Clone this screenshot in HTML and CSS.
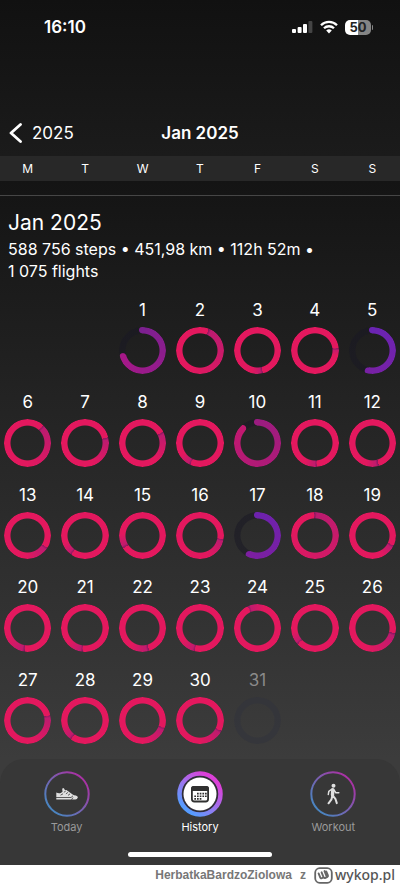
FILE: index.html
```html
<!DOCTYPE html>
<html lang="en">
<head>
<meta charset="utf-8">
<meta name="viewport" content="width=device-width, initial-scale=1">
<title>Jan 2025</title>
<link rel="stylesheet" href="styles.css">
</head>
<body>
<header class="top">
  <div class="status">
    <time class="clock">16:10</time>
    <div class="status-icons">
      <svg width="21" height="14" viewBox="0 0 21 14" aria-hidden="true"><g fill="#fff"><rect x="0" y="9" width="4" height="4" rx="1"/><rect x="5.6" y="7" width="4" height="6" rx="1"/><rect x="11" y="4" width="4" height="9" rx="1"/><rect x="16.4" y="1" width="4" height="12" rx="1" fill="#454545"/></g></svg>
      <svg width="18" height="14" viewBox="0 0 18 14" aria-hidden="true"><g fill="none" stroke="#fff" stroke-width="2.3"><path d="M1 5.2a11.4 11.4 0 0 1 16 0"/><path d="M4 8.3a7.1 7.1 0 0 1 10 0"/></g><path d="M9 13.4 6.2 10.6a4 4 0 0 1 5.6 0z" fill="#fff"/></svg>
      <span class="battery"><span class="battery-level">50</span></span>
    </div>
  </div>
  <nav class="navbar">
    <a class="back" href="#year"><svg width="13" height="20" viewBox="0 0 13 20" aria-hidden="true"><path d="M11.5 1.5 2 10l9.500 8.500" fill="none" stroke="#fff" stroke-width="2.800" stroke-linecap="round" stroke-linejoin="round"/></svg>2025</a>
    <h1 class="title">Jan 2025</h1>
  </nav>
</header>
<div class="weekdays week-grid"><span>M</span><span>T</span><span>W</span><span>T</span><span>F</span><span>S</span><span>S</span></div>
<main class="history">
  <section class="summary">
    <h2>Jan 2025</h2>
    <p>588 756 steps • 451,98 km • 112h 52m •<br>1 075 flights</p>
  </section>
  <section class="days week-grid">
    <button class="day first"><span>1</span><i class="ring partial" style="--head:262deg;--from:#7c2090;--to:#a71888"></i></button>
    <button class="day"><span>2</span><i class="ring" style="--head:22deg;--fade:190deg"></i></button>
    <button class="day"><span>3</span><i class="ring" style="--head:166deg;--fade:30deg"></i></button>
    <button class="day"><span>4</span><i class="ring" style="--head:83deg;--fade:20deg"></i></button>
    <button class="day"><span>5</span><i class="ring partial" style="--head:201deg;--from:#6a24b2;--to:#7821a4"></i></button>
    <button class="day"><span>6</span><i class="ring" style="--head:41deg;--fade:140deg"></i></button>
    <button class="day"><span>7</span><i class="ring" style="--head:76deg;--fade:85deg"></i></button>
    <button class="day"><span>8</span><i class="ring" style="--head:61deg;--fade:80deg"></i></button>
    <button class="day"><span>9</span><i class="ring" style="--head:203deg;--fade:35deg"></i></button>
    <button class="day"><span>10</span><i class="ring partial" style="--head:322deg;--from:#9a1c80;--to:#c21970"></i></button>
    <button class="day"><span>11</span><i class="ring" style="--head:174deg;--fade:35deg"></i></button>
    <button class="day"><span>12</span><i class="ring" style="--head:164deg;--fade:35deg"></i></button>
    <button class="day"><span>13</span><i class="ring" style="--head:121deg;--fade:65deg"></i></button>
    <button class="day"><span>14</span><i class="ring" style="--head:215deg;--fade:35deg"></i></button>
    <button class="day"><span>15</span><i class="ring" style="--head:236deg;--fade:40deg"></i></button>
    <button class="day"><span>16</span><i class="ring" style="--head:98deg;--fade:60deg"></i></button>
    <button class="day"><span>17</span><i class="ring partial" style="--head:213deg;--from:#6d22ae;--to:#7c1fa0"></i></button>
    <button class="day"><span>18</span><i class="ring" style="--head:358deg;--fade:290deg"></i></button>
    <button class="day"><span>19</span><i class="ring" style="--head:115deg;--fade:40deg"></i></button>
    <button class="day"><span>20</span><i class="ring" style="--head:187deg;--fade:60deg"></i></button>
    <button class="day"><span>21</span><i class="ring" style="--head:185deg;--fade:45deg"></i></button>
    <button class="day"><span>22</span><i class="ring" style="--head:163deg;--fade:50deg"></i></button>
    <button class="day"><span>23</span><i class="ring" style="--head:192deg;--fade:40deg"></i></button>
    <button class="day"><span>24</span><i class="ring" style="--head:335deg;--fade:45deg"></i></button>
    <button class="day"><span>25</span><i class="ring" style="--head:226deg;--fade:35deg"></i></button>
    <button class="day"><span>26</span><i class="ring" style="--head:103deg;--fade:90deg"></i></button>
    <button class="day"><span>27</span><i class="ring" style="--head:76deg;--fade:90deg"></i></button>
    <button class="day"><span>28</span><i class="ring" style="--head:216deg;--fade:45deg"></i></button>
    <button class="day"><span>29</span><i class="ring" style="--head:108deg;--fade:70deg"></i></button>
    <button class="day"><span>30</span><i class="ring" style="--head:115deg;--fade:65deg"></i></button>
    <button class="day" disabled><span>31</span><i class="ring empty"></i></button>
  </section>
</main>
<footer class="dock">
  <nav class="tabs">
    <a class="tab" href="#today">
      <svg width="46" height="46" viewBox="0 0 46 46" aria-hidden="true">
        <defs><linearGradient id="thin" x1="0.15" y1="0.85" x2="0.85" y2="0.15"><stop offset="0" stop-color="#4a84c0"/><stop offset=".5" stop-color="#7860b0"/><stop offset="1" stop-color="#a832a4"/></linearGradient></defs>
        <circle cx="23" cy="23" r="21.700" fill="none" stroke="url(#thin)" stroke-width="2"/>
        <path d="M12.300 21.600q2 .9 4.500.4l1.700-1.200-.3-2.800q.7-1.600 1.800-.6l.9 1.600 1.500-.1 6.300 4.500q1.200.9 3.200 1 1.700.4 2 1.800-.6 2.200-2.500 2.200H12.300z" fill="#e0e0e0"/>
        <path d="m19.800 21.400 2-1.500M21.900 22.900l2-1.500M24 24.400l2-1.500M12 26.500h15l2-1.700M27.500 28.800l1.500-2.300M16.500 24.200l2.500-1.400" fill="none" stroke="#383838" stroke-width=".8"/>
      </svg>
      <span>Today</span>
    </a>
    <a class="tab active" href="#history" aria-current="page">
      <svg width="46" height="46" viewBox="0 0 46 46" aria-hidden="true">
        <defs><linearGradient id="bold" x1="0.2" y1="0.9" x2="0.8" y2="0.15"><stop offset="0" stop-color="#559cff"/><stop offset=".45" stop-color="#9878f0"/><stop offset="1" stop-color="#db40d8"/></linearGradient></defs>
        <circle cx="23" cy="23" r="20.500" fill="#302d38" stroke="url(#bold)" stroke-width="4.500"/>
        <circle cx="23" cy="23" r="16.500" fill="#fff"/>
        <rect x="14.900" y="15.900" width="16.200" height="14.600" rx="2.500" fill="#fff" stroke="#303030" stroke-width="1.800"/>
        <path d="M14 20v-2.500q0-2.500 2.500-2.500h13q2.500 0 2.500 2.500V20z" fill="#303030"/>
        <g fill="#303030"><path d="M20 21.800h1.700v1.700H20zM22.700 21.800h1.700v1.700h-1.700zM25.400 21.800h1.700v1.700h-1.700zM28 21.800h1.700v1.700H28zM17.300 24.400H19v1.700h-1.700zM20 24.400h1.700v1.700H20zM22.700 24.400h1.700v1.700h-1.700zM25.400 24.400h1.700v1.700h-1.700zM28 24.400h1.700v1.700H28zM17.300 27H19v1.700h-1.700zM20 27h1.700v1.700H20zM22.700 27h1.700v1.700h-1.700z"/></g>
      </svg>
      <span>History</span>
    </a>
    <a class="tab" href="#workout">
      <svg width="46" height="46" viewBox="0 0 46 46" aria-hidden="true">
        <circle cx="23" cy="23" r="21.700" fill="none" stroke="url(#thin)" stroke-width="2"/>
        <circle cx="23.500" cy="14.700" r="2" fill="#e0e0e0"/>
        <g fill="none" stroke="#e0e0e0" stroke-linecap="round" stroke-linejoin="round"><path d="m22.800 18.800-.3 5.400" stroke-width="3.400"/><path d="m22 18-3.200 2.300-.5 3.200M23.800 18.800l2 2.900 3 .1" stroke-width="1.500"/><path d="m22.300 24.800-.8 3.500-3 4M23 24.800l2.400 3 1.400 4.300" stroke-width="2"/></g>
      </svg>
      <span>Workout</span>
    </a>
  </nav>
  <div class="home-bar"></div>
</footer>
<div class="credit">
  <span class="author">HerbatkaBardzoZiolowa</span><span class="author">z</span>
  <span class="brand"><svg width="19" height="17" viewBox="0 0 19 17" aria-hidden="true"><rect x="1.200" y="1.200" width="16.600" height="14.600" rx="4.500" fill="#fff" stroke="#666" stroke-width="1.800"/><path d="m4.600 6.400 1.700 4.300q.5 1 1.500.5l1.800-.8q.8 1 1.900.4l1.900-.9q.9-.5.5-1.500l-1.700-4M7.600 5.300l2 5.100M10.500 4.100l2.300 5.700" fill="none" stroke="#666" stroke-width="1.900" stroke-linecap="round" stroke-linejoin="round"/></svg>wykop.pl</span>
</div>
</body>
</html>
```
FILE: styles.css
```css
* { box-sizing: border-box; }

body {
  margin: 0;
  min-height: 100vh;
  display: flex;
  flex-direction: column;
  background: #3c3c3c;
  color: #fff;
  font-family: Inter, Roboto, sans-serif;
}

h1, h2, p { margin: 0; font-weight: 400; }
a { color: inherit; text-decoration: none; }

.top {
  background: linear-gradient(#111, #1b1b1b);
  padding: 16px 0 12px;
}

.status {
  display: flex;
  align-items: center;
  justify-content: space-between;
  height: 22px;
  padding: 0 27px 0 44px;
}
.clock { font-size: 17px; font-weight: 600; }
.status-icons { display: flex; align-items: center; gap: 7px; }

.battery { display: flex; align-items: center; gap: 1px; }
.battery::after {
  content: "";
  width: 1px;
  height: 5px;
  border-radius: 0 2px 2px 0;
  background: #858585;
}
.battery-level {
  width: 26px;
  border-radius: 5px;
  background: linear-gradient(90deg, #fff 50%, #858585 50%);
  color: #222;
  font-size: 13px;
  font-weight: 700;
  line-height: 15px;
  text-align: center;
}

.navbar {
  display: grid;
  grid-template-columns: 1fr auto 1fr;
  align-items: center;
  padding: 0 9px;
  margin-top: 84px;
  font-size: 17px;
  line-height: 22px;
}
.back { display: flex; align-items: center; gap: 10px; }
.title { font-size: 17px; font-weight: 600; }

.week-grid {
  display: grid;
  grid-template-columns: repeat(7, 1fr);
  column-gap: 10px;
  padding: 0 4px;
}
.weekdays {
  background: #282828;
  font-size: 12px;
  line-height: 25px;
  text-align: center;
}

.history {
  flex: 1;
  background: linear-gradient(#141414, #3c3c3c);
  padding-top: 14px;
}
.summary {
  border-top: 1px solid #464646;
  padding: 12px 8px 16px;
}
.summary h2 { font-size: 21px; line-height: 30px; }
.summary p { font-size: 16px; line-height: 22px; }

.days { row-gap: 16px; padding-bottom: 15px; }
.day {
  display: flex;
  flex-direction: column;
  gap: 5px;
  padding: 0;
  border: 0;
  background: none;
  color: #fff;
  font: 400 17px/24px Inter, Roboto, sans-serif;
  text-align: center;
}
.day:disabled { color: #8a8a8a; }
.first { grid-column: 3; }

/* Progress past the goal laps over the start of the ring. */
.ring {
  --head: 0deg;
  --fade: 0deg;
  --to: #e3185e;
  --cap: calc(var(--head) - 8deg);
  position: relative;
  width: 100%;
  aspect-ratio: 1;
  border-radius: 50%;
  background:
    conic-gradient(from var(--cap), #0000 8deg, #30104066 8deg, #0000 15deg),
    conic-gradient(from var(--head), #ba1b70, var(--to) var(--fade));
  -webkit-mask: radial-gradient(closest-side, #0000 calc(100% - 7px), #000 calc(100% - 6px));
  mask: radial-gradient(closest-side, #0000 calc(100% - 7px), #000 calc(100% - 6px));
}
.ring::before,
.ring::after {
  position: absolute;
  inset: 0;
  background: radial-gradient(circle at 50% 3px, var(--to) 3px, #0000 4px);
}
.ring::after { content: ""; transform: rotate(var(--cap)); }

.partial { background: conic-gradient(var(--from), var(--to) var(--cap), #19182488 var(--cap)); }
.partial::before {
  content: "";
  background: radial-gradient(circle at 50% 3px, var(--from) 3px, #0000 4px);
}

.empty { background: #32333c99; }
.empty::after { content: none; }

.dock {
  padding: 12px 0 8px;
  background: #373737;
  border-radius: 24px 24px 0 0;
}
.tabs { display: grid; grid-template-columns: repeat(3, 1fr); }
.tab {
  display: flex;
  flex-direction: column;
  align-items: center;
  gap: 2px;
  color: #9a9a9a;
  font-size: 11px;
  line-height: 16px;
}
.active { color: #fff; }
.home-bar {
  width: 36%;
  height: 5px;
  margin: 17px auto 0;
  border-radius: 3px;
  background: #fff;
}

.credit {
  display: flex;
  align-items: center;
  justify-content: flex-end;
  gap: 8px;
  height: 20px;
  padding-right: 5px;
  background: #fff;
  color: #777;
}
.author { font: 700 12px/20px "Liberation Sans", sans-serif; }
.brand {
  display: flex;
  align-items: center;
  gap: 2px;
  color: #555;
  font: 500 14px/20px "Noto Sans", sans-serif;
}
```
